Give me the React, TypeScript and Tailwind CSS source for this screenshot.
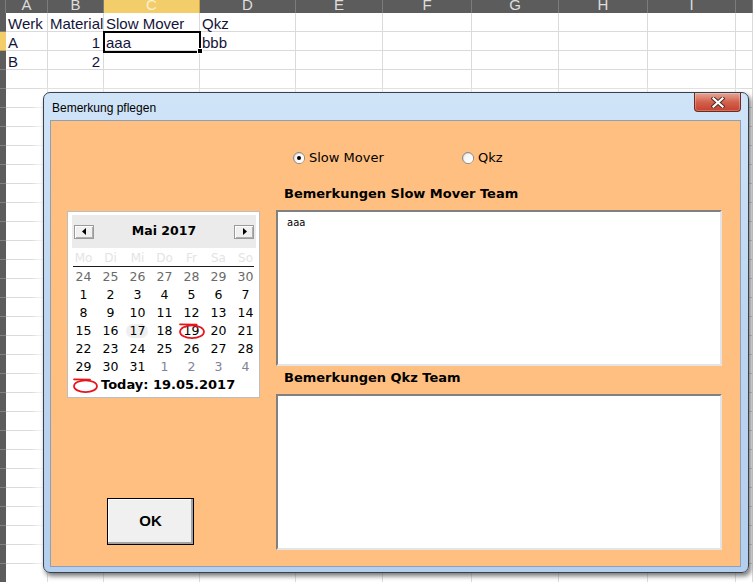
import React from "react";

const COLS = ["", "A", "B", "C", "D", "E", "F", "G", "H", "I", ""];
const ROWS = 30;

const DATA: Record<string, { t: string; right?: boolean }> = {
  "1-1": { t: "Werk" },
  "1-2": { t: "Material" },
  "1-3": { t: "Slow Mover" },
  "1-4": { t: "Qkz" },
  "2-1": { t: "A" },
  "2-2": { t: "1", right: true },
  "2-3": { t: "aaa" },
  "2-4": { t: "bbb" },
  "3-1": { t: "B" },
  "3-2": { t: "2", right: true },
};

function Sheet() {
  const cells: React.ReactNode[] = [];
  COLS.forEach((c, i) => {
    const sel = i === 3;
    cells.push(
      <div
        key={"h" + i}
        className={
          "overflow-hidden text-center text-[15px] leading-[9px] border-r " +
          (sel
            ? "bg-[#f3cd69] text-[#fbf1d2] border-[#c9a54a]"
            : "bg-[#5c5c5c] text-[#dedede] border-[#7c7c7c]")
        }
      >
        {c}
      </div>
    );
  });
  for (let r = 1; r <= ROWS; r++) {
    cells.push(
      <div
        key={"r" + r}
        className={
          "border-b " +
          (r === 2 ? "bg-[#f3cd69] border-[#c9a54a]" : "bg-[#5c5c5c] border-[#808080]")
        }
      />
    );
    for (let c = 1; c < COLS.length; c++) {
      const d = DATA[r + "-" + c];
      cells.push(
        <div
          key={r + "-" + c}
          className={
            "bg-white border-r border-b border-[#dadada] pt-[3px] pl-[2px] pr-[3px] text-[15px] leading-[15px] text-[#14143a] whitespace-nowrap " +
            (d && d.right ? "text-right" : "text-left")
          }
        >
          {d ? d.t : ""}
        </div>
      );
    }
  }
  return (
    <div className="grid grid-cols-[6px_42px_56px_96px_96px_87px_89px_87px_89px_88px_1fr] grid-rows-[13px] auto-rows-[19px] font-['Liberation_Sans',Arial,sans-serif]">
      {cells}
    </div>
  );
}

function Radio({ checked }: { checked?: boolean }) {
  return (
    <span className="w-[12px] h-[12px] rounded-full border border-[#8a8a8a] bg-gradient-to-br from-[#d6d6d6] to-white flex items-center justify-center shrink-0">
      <span className="w-[9px] h-[9px] rounded-full bg-gradient-to-br from-[#f4f4f4] to-white flex items-center justify-center">
        {checked ? <span className="w-[4px] h-[4px] rounded-full bg-black" /> : null}
      </span>
    </span>
  );
}

function ArrowBtn({ dir }: { dir: "l" | "r" }) {
  return (
    <div className="w-[20px] h-[14px] bg-[#f0f0f0] border border-[#9a9a9a] shadow-[inset_1px_1px_0_#ffffff,inset_-1px_-1px_0_#b0b0b0] flex items-center justify-center">
      <svg width="5" height="7" viewBox="0 0 5 7">
        {dir === "l" ? <path d="M4 0 L0 3.5 L4 7 Z" fill="#000" /> : <path d="M1 0 L5 3.5 L1 7 Z" fill="#000" />}
      </svg>
    </div>
  );
}

const DAYS = ["Mo", "Di", "Mi", "Do", "Fr", "Sa", "So"];
const DATES: { n: number; k: "p" | "c" | "n" }[] = [
  ...[24, 25, 26, 27, 28, 29, 30].map((n) => ({ n, k: "p" as const })),
  ...Array.from({ length: 31 }, (_, i) => ({ n: i + 1, k: "c" as const })),
  ...[1, 2, 3, 4].map((n) => ({ n, k: "n" as const })),
];

function RedMark({ w, h }: { w: number; h: number }) {
  return (
    <svg width={w} height={h} viewBox={`0 0 ${w} ${h}`} className="block">
      <path d={`M1 1.3 L${w * 0.68} 1.6`} stroke="#e8141c" strokeWidth="1.7" fill="none" strokeLinecap="round" />
      <ellipse cx={w / 2} cy={h / 2 + 0.7} rx={w / 2 - 1} ry={h / 2 - 1.6} stroke="#e8141c" strokeWidth="1.7" fill="none" />
    </svg>
  );
}

function Calendar() {
  return (
    <div className="h-[187px] border border-[#bdbdbd] bg-white flex flex-col font-['DejaVu_Sans',Verdana,sans-serif]">
      <div className="mt-[3px] ml-[4px] mr-[3px] h-[33px] bg-[#ebebeb] flex items-center justify-between px-[2px]">
        <ArrowBtn dir="l" />
        <span className="text-[12.5px] font-bold text-black">Mai 2017</span>
        <ArrowBtn dir="r" />
      </div>
      <div className="ml-[2px] grid grid-cols-[repeat(7,27px)] h-[18px]">
        {DAYS.map((d) => (
          <div key={d} className="text-center text-[12px] leading-[20px] text-[#e4e4e4]">
            {d}
          </div>
        ))}
      </div>
      <div className="mx-[5px] h-px bg-[#1a1a1a]" />
      <div className="mt-[1px] ml-[2px] grid grid-cols-[repeat(7,27px)] auto-rows-[18px]">
        {DATES.map((d, i) => (
          <div
            key={i}
            className={
              "relative flex items-center justify-center text-[12.5px] " +
              (d.k === "p" ? "text-[#6a6a6a]" : d.k === "n" ? "text-[#82829a]" : "text-black")
            }
          >
            {d.k === "c" && d.n === 17 ? (
              <span className="absolute left-[2px] top-[2px] w-[22px] h-[14px] rounded-full bg-[#efefef]" />
            ) : null}
            <span className="relative">{d.n}</span>
            {d.k === "c" && d.n === 19 ? (
              <span className="absolute left-[1px] top-[1px]">
                <RedMark w={26} h={16} />
              </span>
            ) : null}
          </div>
        ))}
      </div>
      <div className="h-[18px] flex items-center">
        <span className="ml-[5px]">
          <RedMark w={25} h={15} />
        </span>
        <span className="ml-[3px] text-[13px] font-bold text-black leading-[18px]">Today: 19.05.2017</span>
      </div>
    </div>
  );
}

function TextBox({ children }: { children?: React.ReactNode }) {
  return (
    <div className="h-[156px] bg-white border-2 border-t-[#808080] border-l-[#808080] border-r-[#e4e4e4] border-b-[#e4e4e4] pl-[9px] pt-[5px] text-[10px] leading-[12px] text-black font-['DejaVu_Sans',Tahoma,sans-serif]">
      {children}
    </div>
  );
}

function CloseButton() {
  return (
    <div className="absolute right-[7px] top-0 w-[47px] h-[19px] rounded-b-[4px] border border-t-0 border-[#6d2a20] bg-gradient-to-b from-[#e6a597] via-[#d2614d] to-[#c5412c] shadow-[inset_0_0_0_1px_rgba(255,255,255,0.25)] flex items-center justify-center">
      <svg width="14" height="11" viewBox="0 0 14 11">
        <path d="M2.5 1.5 L11.5 9.5 M11.5 1.5 L2.5 9.5" stroke="#4a2a26" strokeWidth="4" strokeLinecap="square" />
        <path d="M2.5 1.5 L11.5 9.5 M11.5 1.5 L2.5 9.5" stroke="#ffffff" strokeWidth="2.2" strokeLinecap="square" />
      </svg>
    </div>
  );
}

function Dialog() {
  return (
    <div className="absolute left-[43px] top-[92px] w-[706px] h-[481px] rounded-[7px] border border-[#36414f] bg-gradient-to-b from-[#d0e4f8] via-[#bcd4ef] to-[#b4cfee] shadow-[2px_3px_5px_rgba(0,0,0,0.55),-6px_0_10px_rgba(255,255,255,0.9)] flex flex-col">
      <div className="relative h-[27px] shrink-0">
        <span className="absolute left-[8px] top-[8px] text-[12px] leading-[14px] text-black font-['Liberation_Sans',Arial,sans-serif]">
          Bemerkung pflegen
        </span>
        <CloseButton />
      </div>
      <div className="ml-[6px] mr-[7px] mb-[5px] flex-1 border border-[#8aa0bb] bg-[#ffbf80] flex pl-[16px]">
        <div className="w-[193px] flex flex-col">
          <div className="mt-[90px]">
            <Calendar />
          </div>
          <div className="mt-[100px] ml-[40px] w-[87px] h-[47px] border border-black bg-[#f0f0f0] shadow-[inset_-2px_-2px_0_#a3a3a3,inset_1px_1px_0_#ffffff] flex items-center justify-center text-[15px] font-bold text-black font-['Liberation_Sans',Arial,sans-serif]">
            OK
          </div>
        </div>
        <div className="ml-[16px] w-[446px] flex flex-col font-['DejaVu_Sans',Verdana,sans-serif] text-black">
          <div className="mt-[30px] h-[14px] flex items-center text-[13px]">
            <div className="ml-[17px] w-[169px] flex items-center gap-[4px]">
              <Radio checked />
              <span>Slow Mover</span>
            </div>
            <div className="flex items-center gap-[4px]">
              <Radio />
              <span>Qkz</span>
            </div>
          </div>
          <div className="mt-[21px] h-[16px] leading-[16px] ml-[8px] text-[13px] font-bold">Bemerkungen Slow Mover Team</div>
          <div className="mt-[8px]">
            <TextBox>aaa</TextBox>
          </div>
          <div className="mt-[4px] h-[16px] leading-[16px] ml-[8px] text-[13px] font-bold">Bemerkungen Qkz Team</div>
          <div className="mt-[8px]">
            <TextBox />
          </div>
        </div>
      </div>
    </div>
  );
}

export default function App() {
  return (
    <div className="relative w-[753px] h-[582px] overflow-hidden bg-white">
      <Sheet />
      <div className="absolute left-[103px] top-[31px] w-[98px] h-[22px] border-2 border-black" />
      <div className="absolute left-[197px] top-[48px] w-[6px] h-[6px] bg-black border border-white" />
      <Dialog />
    </div>
  );
}
